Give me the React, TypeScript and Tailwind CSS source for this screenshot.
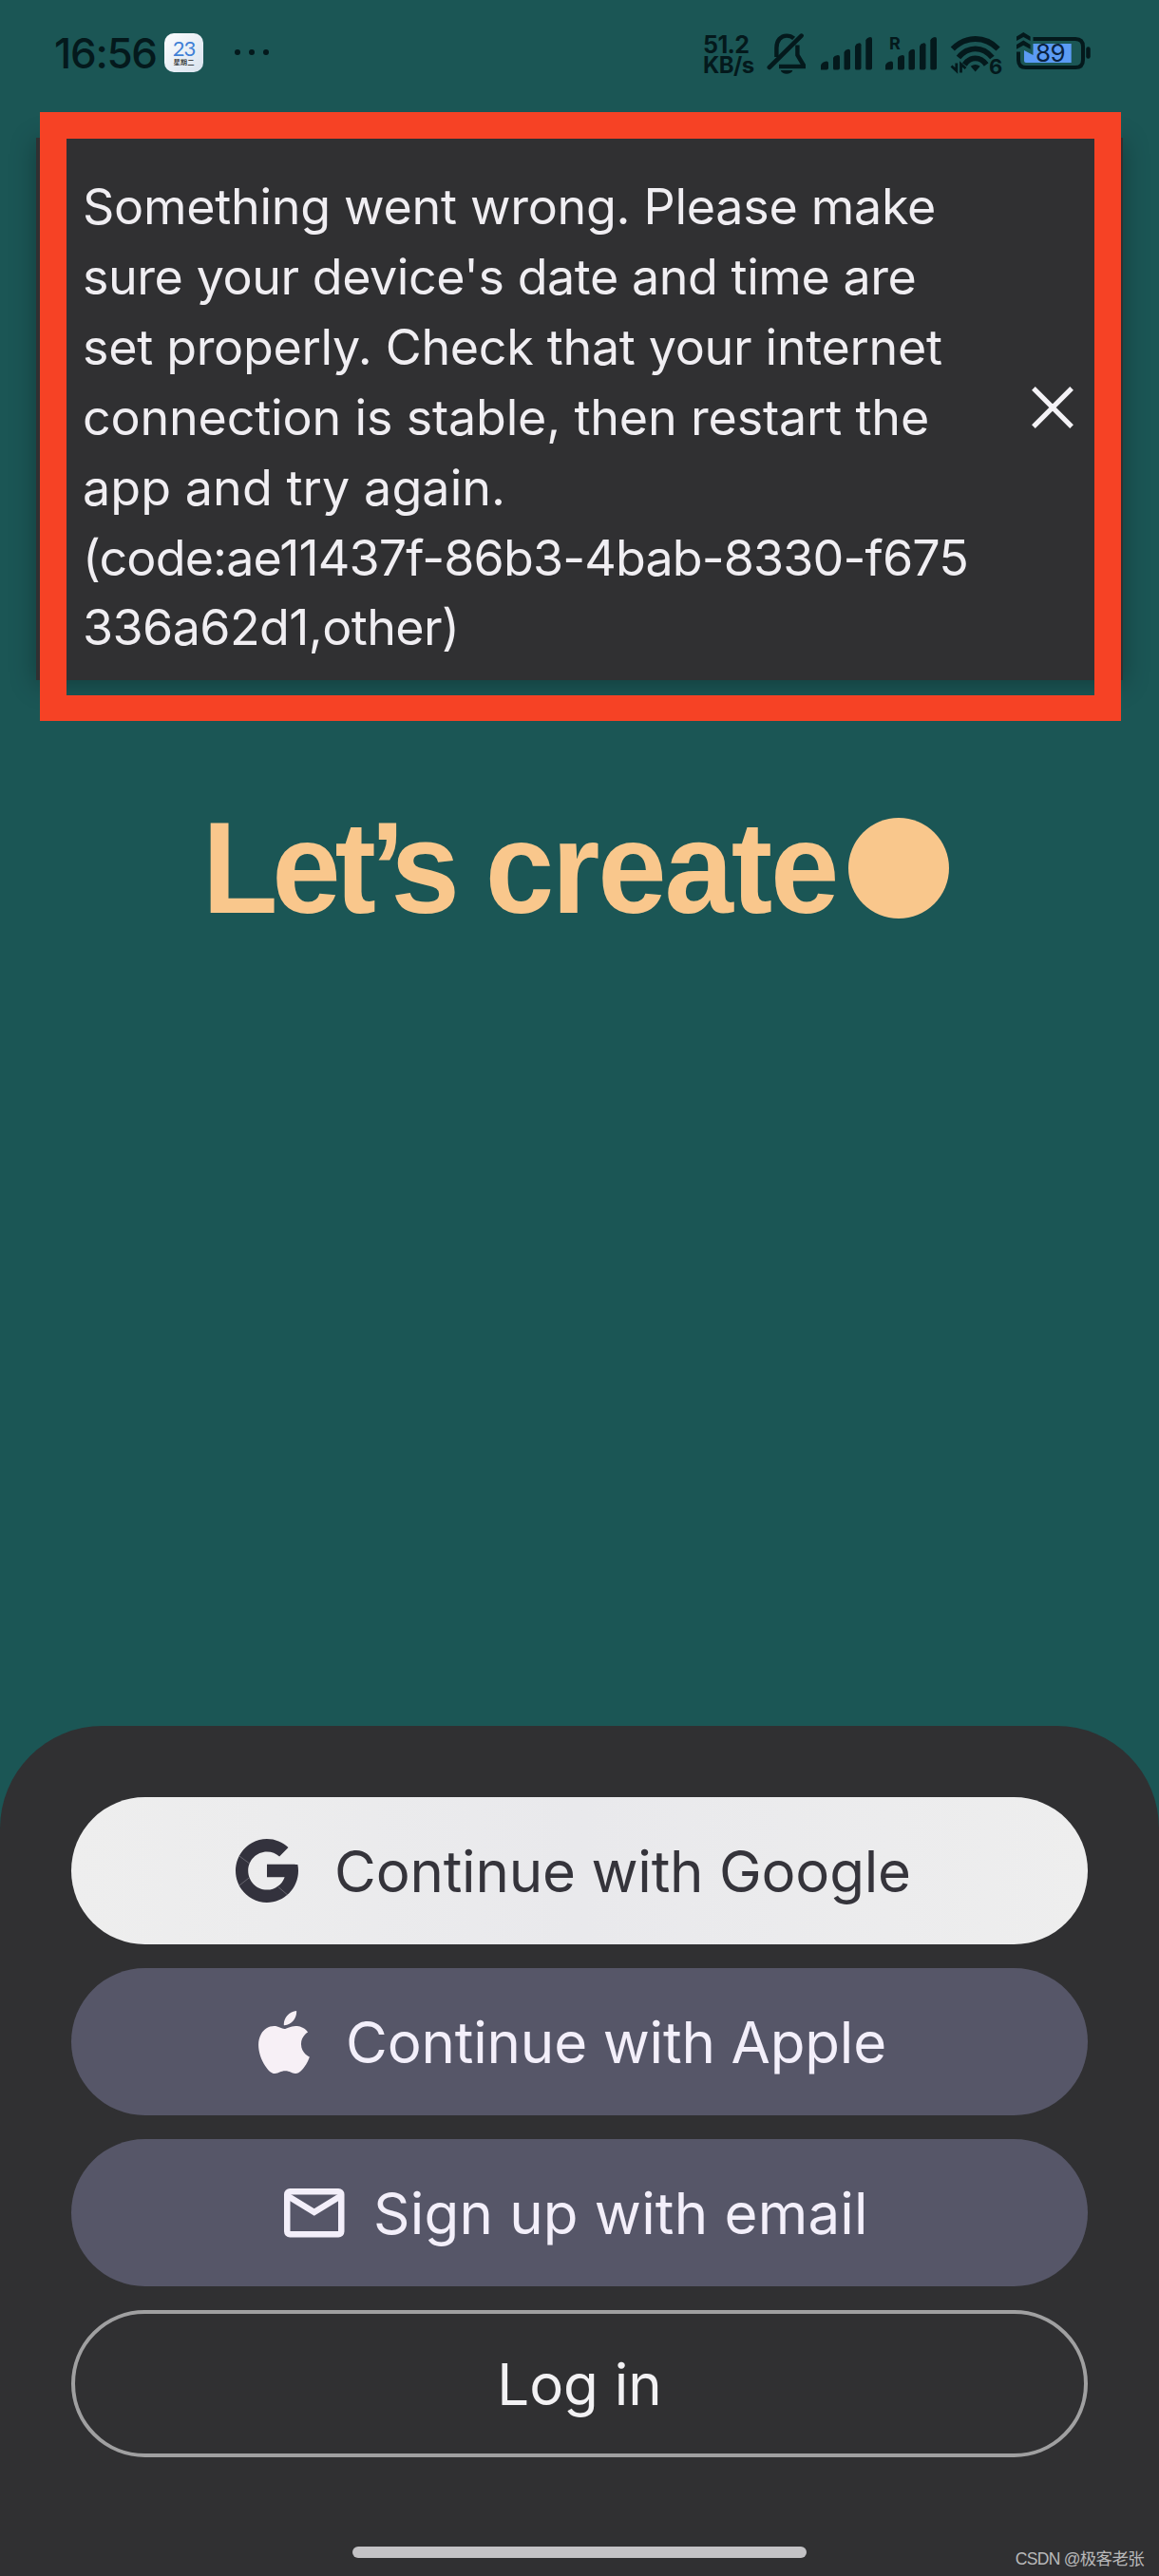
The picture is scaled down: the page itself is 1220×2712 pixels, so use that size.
import type { ReactNode } from "react";

const INK = "#04191c";

const MESSAGE = [
  { text: "Something went wrong. Please make", track: "tracking-[-0.29px]" },
  { text: "sure your device's date and time are", track: "tracking-[-0.44px]" },
  { text: "set properly. Check that your internet", track: "tracking-[-0.31px]" },
  { text: "connection is stable, then restart the", track: "tracking-[-0.18px]" },
  { text: "app and try again.", track: "tracking-[0.08px]" },
  { text: "(code:ae11437f-86b3-4bab-8330-f675", track: "tracking-[-0.87px]" },
  { text: "336a62d1,other)", track: "tracking-[-0.6px]" },
];

function BellOff() {
  return (
    <svg width="42" height="46" viewBox="807 34 42 46" fill="none" stroke={INK} strokeWidth="4.4">
      <path d="M817.4 60V50.5C817.4 42.5 822 37.6 828 37.6C831 37.6 833.6 38.6 835.6 40.4" />
      <path d="M809.8 71L843.6 37.6" strokeWidth="4.6" strokeLinecap="round" />
      <path d="M839.4 47.5V58L846 69" />
      <path d="M820 70H848" />
      <path d="M821.8 74H834.4C833 79 823 79 821.8 74Z" fill={INK} stroke="none" />
    </svg>
  );
}

function SignalBars() {
  return (
    <svg width="56" height="40" viewBox="0 0 56 40" fill={INK}>
      <path d="M0 39.5V34.5Q1.5 31 6 30.5Q8 30.5 8 32.5V37.5Q8 39.5 6 39.5Z" />
      <path d="M13 27Q14 24.5 18 24Q20 24 20 26V37.5Q20 39.5 18 39.5H14.5Q13 39.5 13 38Z" />
      <path d="M24.5 21Q25.5 18.3 29 17.8Q31 17.8 31 19.8V37.5Q31 39.5 29 39.5H26Q24.5 39.5 24.5 38Z" />
      <path d="M36 14.5Q37 11.8 40.5 11.3Q42.5 11.3 42.5 13.3V37.5Q42.5 39.5 40.5 39.5H37.5Q36 39.5 36 38Z" />
      <path d="M47.3 8.5Q48.3 5.5 52 5Q54 5 54 7V37.5Q54 39.5 52 39.5H49Q47.3 39.5 47.3 38Z" />
    </svg>
  );
}

function Wifi() {
  return (
    <svg width="56" height="46" viewBox="1000 34 56 46" fill="none" stroke={INK} strokeWidth="5.8">
      <path d="M1002.8 51.5Q1013 41 1026.7 41Q1040.5 41 1050.6 51.5" />
      <path d="M1009 60.5Q1016.5 51.3 1026.7 51.3Q1037 51.3 1044.4 60.5" />
      <path d="M1015.3 68Q1020 61.3 1026.7 61.3Q1033.5 61.3 1038.2 68" />
      <path d="M1021.7 69.8Q1026.7 66 1031.7 69.8L1026.7 75.5Z" fill={INK} stroke="none" />
      <path d="M1001.5 69.5L1006.8 74.5V66.5M1016.5 72L1011.5 67.5V76.5" strokeWidth="2.8" />
    </svg>
  );
}

function Battery() {
  return (
    <svg width="80" height="46" viewBox="1069 30 80 46" fill="none" stroke={INK} strokeWidth="4">
      <path d="M1078 53L1087.5 58V46H1127.7V66H1080Q1078 66 1078 64Z" fill="#5b9bf5" stroke="none" />
      <path d="M1087.5 41H1132Q1140 41 1140 49V63Q1140 71 1132 71H1080Q1072 71 1072 63V54.5" />
      <path d="M1145.5 51.5V59.5" strokeLinecap="round" strokeWidth="4.5" />
      <path
        d="M1070 38.5L1077.3 34L1084.6 38.5V43L1077.3 39L1070 43ZM1070 47L1077.3 42.5L1084.6 47V51.8L1077.3 47.8L1070 51.8Z"
        fill={INK}
        stroke="none"
      />
    </svg>
  );
}

function StatusBar() {
  return (
    <header className="flex h-[118px] shrink-0 items-start pt-[34px] text-[#04191c]">
      <div className="ml-[57px] w-[116px] text-[44px] leading-[45px] font-medium tracking-[-1.3px] whitespace-nowrap">
        16:56
      </div>
      <div className="mt-px flex h-[41px] w-[41px] flex-col items-center rounded-[10px] bg-gradient-to-br from-[#fbfcfe] to-[#d9e3ee] pt-[6px]">
        <span className="font-[Lato] text-[22px] leading-[19px] tracking-[-1px] text-[#3f7fd6]">23</span>
        <span className="mt-px font-['Noto_Sans_CJK_SC'] text-[7.3px] leading-[9px] font-medium text-[#222]">星期二</span>
      </div>
      <div className="mt-[18px] ml-[33px] flex gap-[9px]">
        <i className="h-1.5 w-1.5 rounded-full bg-[#04191c]" />
        <i className="h-1.5 w-1.5 rounded-full bg-[#04191c]" />
        <i className="h-1.5 w-1.5 rounded-full bg-[#04191c]" />
      </div>
      <div className="mt-[2px] ml-[457px] w-[67px] font-bold whitespace-nowrap">
        <div className="text-[25px] leading-[22px] tracking-[-0.6px]">51.2</div>
        <div className="text-[24px] leading-[22px] tracking-[-0.6px]">KB/s</div>
      </div>
      <BellOff />
      <div className="ml-[15px]">
        <SignalBars />
      </div>
      <div className="relative ml-3">
        <SignalBars />
        <span className="absolute top-[3px] left-[4px] text-[18px] leading-[18px] font-bold">R</span>
      </div>
      <div className="relative ml-3">
        <Wifi />
        <span className="absolute top-[24px] left-[41px] text-[22px] leading-[24px] font-bold">6</span>
      </div>
      <div className="relative -mt-1 ml-[13px]">
        <Battery />
        <span className="absolute top-[12px] left-[21px] text-[26px] leading-[28px] tracking-[-0.5px] text-[#0a2240]">
          89
        </span>
      </div>
    </header>
  );
}

function ErrorCard() {
  return (
    <section className="relative h-[641px] shrink-0 px-[38px] pt-[27px]">
      <div className="flex h-[571px] items-start bg-[#303032] shadow-[0_4px_26px_rgba(0,0,0,0.3)]">
        <p className="mt-[36px] ml-[49px] w-[999px] text-[52px] leading-[73.9px] text-[#f0eef2]">
          {MESSAGE.map((line) => (
            <span key={line.text} className={`block whitespace-nowrap ${line.track}`}>
              {line.text}
            </span>
          ))}
        </p>
        <svg className="mt-[262px]" width="44" height="44" viewBox="0 0 44 44" stroke="#f4f2f6" strokeWidth="5.2">
          <path d="M1.9 1.9L42.1 42.1M42.1 1.9L1.9 42.1" />
        </svg>
      </div>
      <div className="absolute top-0 left-[42px] h-[641px] w-[1138px] border-x-[28px] border-t-[28px] border-b-[27px] border-[#f64225]" />
    </section>
  );
}

function ActionButton({ className, children }: { className: string; children: ReactNode }) {
  return (
    <button
      className={`flex h-[155px] w-full items-center rounded-full text-[60px] leading-[72px] whitespace-nowrap ${className}`}
    >
      {children}
    </button>
  );
}

function GoogleIcon() {
  return (
    <svg width="66" height="67" viewBox="4 4 40 40" preserveAspectRatio="none">
      <path
        fill="#33323d"
        d="M43.611,20.083H42V20H24v8h11.303c-1.649,4.657-6.08,8-11.303,8c-6.627,0-12-5.373-12-12c0-6.627,5.373-12,12-12c3.059,0,5.842,1.154,7.961,3.039l5.657-5.657C34.046,6.053,29.268,4,24,4C12.955,4,4,12.955,4,24c0,11.045,8.955,20,20,20c11.045,0,20-8.955,20-20C44,22.659,43.862,21.35,43.611,20.083z"
      />
      <path d="M6.3 14.7L12.9 19.5M6.3 33.3L12.8 28.3M31.2 34.2L37.4 39.4" stroke="#8a8992" strokeWidth="0.35" />
    </svg>
  );
}

function AppleIcon() {
  return (
    <svg width="54" height="66" viewBox="2.2 0 19.64 24" fill="#f7f0f6">
      <path d="M12.152 6.896c-.948 0-2.415-1.078-3.96-1.04-2.04.027-3.91 1.183-4.961 3.014-2.117 3.675-.546 9.103 1.519 12.09 1.013 1.454 2.208 3.09 3.792 3.039 1.52-.065 2.09-.987 3.935-.987 1.831 0 2.35.987 3.96.948 1.637-.026 2.676-1.48 3.676-2.948 1.156-1.688 1.636-3.325 1.662-3.415-.039-.013-3.182-1.221-3.22-4.857-.026-3.04 2.48-4.494 2.597-4.559-1.429-2.09-3.623-2.324-4.39-2.376-2-.156-3.675 1.09-4.61 1.09zM15.53 3.83c.843-1.012 1.4-2.427 1.245-3.83-1.207.052-2.662.805-3.532 1.818-.78.896-1.454 2.338-1.273 3.714 1.338.104 2.715-.688 3.559-1.701" />
    </svg>
  );
}

function MailIcon() {
  return (
    <svg width="64" height="52" viewBox="0 0 64 52" fill="none" stroke="#f3effa" strokeWidth="6.5">
      <rect x="3.25" y="3.25" width="57" height="45" rx="3" />
      <path d="M4 8L31.75 25L59.5 8" />
    </svg>
  );
}

export default function App() {
  return (
    <main className="flex h-[2712px] w-[1220px] flex-col overflow-hidden bg-[#1b5655] font-[Inter,'Noto_Sans_CJK_SC',sans-serif]">
      <StatusBar />
      <ErrorCard />

      <h1 className="mt-[82px] ml-[213px] flex h-[146px] items-center text-[#f9c78c]">
        <span className="w-[680px] origin-left scale-x-[0.95] font-['Liberation_Sans'] text-[137px] leading-[146px] font-bold whitespace-nowrap">
          <span className="tracking-[-6.5px]">Let</span>
          <span className="tracking-[-15px]">’</span>
          <span className="tracking-[-5px]">s </span>
          <span className="tracking-[-2.3px]">create</span>
        </span>
        <span className="h-[106px] w-[106px] rounded-full bg-[#f9c78c]" />
      </h1>

      <section className="mt-auto flex h-[895px] shrink-0 flex-col rounded-t-[108px] bg-[#303032] px-[75px] pt-[75px]">
        <div className="flex flex-col gap-[25px]">
          <ActionButton className="bg-gradient-to-r from-[#eeeeee] via-[#e9e9ec] to-[#eeeeee] pl-[173px] tracking-[-0.2px] text-[#35343b]">
            <GoogleIcon />
            <span className="mt-px ml-[38px]">Continue with Google</span>
          </ActionButton>
          <ActionButton className="bg-[#565668] pl-[197px] tracking-[-0.17px] text-[#f3effa]">
            <AppleIcon />
            <span className="mt-px ml-[38px]">Continue with Apple</span>
          </ActionButton>
          <ActionButton className="bg-[#565668] pl-[224px] tracking-[0.2px] text-[#f3effa]">
            <MailIcon />
            <span className="mt-px ml-[30px]">Sign up with email</span>
          </ActionButton>
          <ActionButton className="justify-center border-4 border-[#a0a0a1] text-[#f2f1f3]">
            <span className="mt-px">Log in</span>
          </ActionButton>
        </div>
        <div className="mt-[94px] flex justify-between pl-[296px]">
          <div className="h-3 w-[478px] rounded-full bg-[#c3c2c5]" />
          <div className="-mr-[59px] font-['Liberation_Sans','Noto_Sans_CJK_SC'] text-[17.5px] leading-[26px] tracking-[-0.7px] whitespace-nowrap text-[#b9b9ba]">
            CSDN @极客老张
          </div>
        </div>
      </section>
    </main>
  );
}
